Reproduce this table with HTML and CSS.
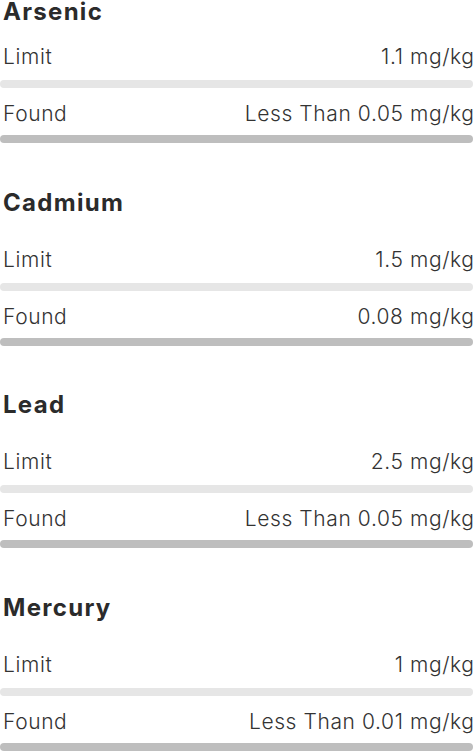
FILE: index.html
```html
<!DOCTYPE html>
<html lang="en">

<head>
    <meta charset="UTF-8">
    <meta name="viewport" content="width=device-width, initial-scale=1.0">
    <title>Heavy Metals</title>
    <link rel="stylesheet" href="styles.css">
</head>

<body>

    <div class="results">
        <section class="metal">
            <h3 class="metal-name">Arsenic</h3>
            <div class="row"><span>Limit</span><span>1.1 mg/kg</span></div>
            <div class="bar bar-limit"></div>
            <div class="row row-found"><span>Found</span><span>Less Than 0.05 mg/kg</span></div>
            <div class="bar bar-found"></div>
        </section>

        <section class="metal">
            <h3 class="metal-name">Cadmium</h3>
            <div class="row"><span>Limit</span><span>1.5 mg/kg</span></div>
            <div class="bar bar-limit"></div>
            <div class="row row-found"><span>Found</span><span>0.08 mg/kg</span></div>
            <div class="bar bar-found"></div>
        </section>

        <section class="metal">
            <h3 class="metal-name">Lead</h3>
            <div class="row"><span>Limit</span><span>2.5 mg/kg</span></div>
            <div class="bar bar-limit"></div>
            <div class="row row-found"><span>Found</span><span>Less Than 0.05 mg/kg</span></div>
            <div class="bar bar-found"></div>
        </section>

        <section class="metal">
            <h3 class="metal-name">Mercury</h3>
            <div class="row"><span>Limit</span><span>1 mg/kg</span></div>
            <div class="bar bar-limit"></div>
            <div class="row row-found"><span>Found</span><span>Less Than 0.01 mg/kg</span></div>
            <div class="bar bar-found"></div>
        </section>
    </div>

</body>

</html>
```

FILE: styles.css
```css
body {
    margin: 0;
    background-color: #fff;
    font-family: Inter, "Noto Sans", sans-serif;
    color: #333;
    overflow: hidden;
}

.results {
    display: flex;
    flex-direction: column;
}

.metal {
    display: flex;
    flex-direction: column;
    padding-bottom: 45.5px;
}

.metal-name {
    margin: 0 0 19px;
    padding-left: 3px;
    font-size: 24px;
    line-height: 28px;
    font-weight: 700;
    letter-spacing: 1.3px;
    color: #2b2b2b;
}

.metal:first-child .metal-name {
    margin-top: -2px;
    margin-bottom: 7px;
}

.row {
    display: flex;
    justify-content: space-between;
    margin: 10px 0 9px;
    padding-left: 3px;
    font-size: 21px;
    line-height: 28px;
    font-weight: 300;
    letter-spacing: 0.6px;
}

.row-found {
    margin: 12px 0 7px;
}

.row span:last-child {
    margin-right: -0.6px;
}

.bar {
    height: 8px;
    margin-right: 1px;
    border-radius: 4px;
}

.bar-limit {
    background-color: #e6e6e6;
}

.bar-found {
    background-color: #bebebe;
}
```
